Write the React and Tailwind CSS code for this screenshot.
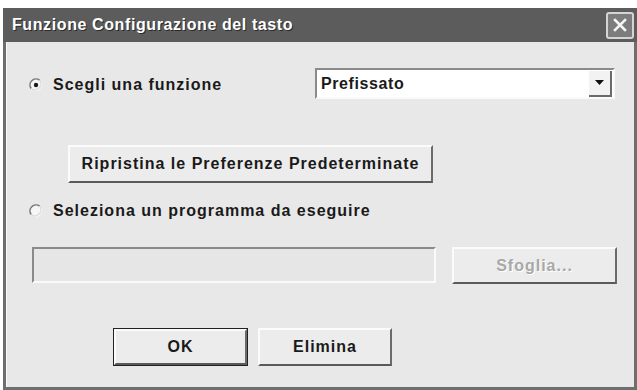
import React from "react";

function Radio({ checked }) {
  return (
    <svg width="14" height="14" viewBox="0 0 14 14" className="shrink-0">
      <circle cx="7" cy="7" r="6" fill="#f6f6f6" />
      <path d="M2.2 10.6 A6 6 0 0 1 10.6 2.2" fill="none" stroke="#7a7a7a" strokeWidth="1.6" />
      <path d="M10.6 2.2 A6 6 0 0 1 2.2 10.6" fill="none" stroke="#dadada" strokeWidth="1.2" />
      {checked && <circle cx="7" cy="7" r="2.2" fill="#1a1a1a" />}
    </svg>
  );
}

const raised =
  "border-t-2 border-l-2 border-t-[#fbfbfb] border-l-[#fbfbfb] border-b-2 border-r-2 border-b-[#5a5a5a] border-r-[#6a6a6a]";
const sunken =
  "border-t-2 border-l-2 border-t-[#8a8a8a] border-l-[#8a8a8a] border-b-2 border-r-2 border-b-[#fafafa] border-r-[#fafafa]";

export default function App() {
  const font = { fontFamily: '"Liberation Sans", Arial, sans-serif' };
  return (
    <div className="w-[637px] h-[390px] bg-white overflow-hidden" style={font}>
      <div className="ml-[3px] mt-[8px] w-[634px] h-[382px] flex flex-col bg-[#e8e8e8] border-l-[3px] border-r-[3px] border-b-[3px] border-[#6e6e6e]">
        {/* Title bar */}
        <div className="h-[34px] -mx-[3px] bg-[#5c5c5c] flex items-center pl-[9px] pr-[3px] shrink-0">
          <span className="text-white text-[16px] font-bold tracking-[0.6px] [text-shadow:1px_1px_0_#2a2a2a] leading-none">
            Funzione Configurazione del tasto
          </span>
          <div className="ml-auto w-[28px] h-[27px] border-2 border-[#d4d4d4] rounded-[3px] bg-[#7c7c7c] flex items-center justify-center">
            <svg width="16" height="16" viewBox="0 0 16 16">
              <path d="M3 3 L13 13 M13 3 L3 13" stroke="#f4f4f4" strokeWidth="2.6" strokeLinecap="square" />
            </svg>
          </div>
        </div>

        {/* Body */}
        <div className="flex flex-col border-l border-[#fafafa] flex-1">
          {/* Row 1 */}
          <div className="mt-[27px] h-[31px] flex items-center pr-[19px]">
            <div className="ml-[22px] flex items-center gap-[10px]">
              <Radio checked />
              <span className="text-[16px] font-bold tracking-[1px] text-[#1a1a1a]">Scegli una funzione</span>
            </div>
            <div className={`ml-auto -mt-[2px] w-[300px] h-[31px] bg-white flex items-center ${sunken}`}>
              <span className="pl-[4px] text-[16px] font-bold tracking-[0.6px] text-[#1a1a1a]">Prefissato</span>
              <div className="ml-auto mr-[1px] w-[23px] h-[26px] bg-[#f2f2f2] border-b-2 border-r-2 border-b-[#6a6a6a] border-r-[#6a6a6a] flex items-center justify-center">
                <svg width="9" height="5" viewBox="0 0 9 5">
                  <path d="M0 0 H9 L4.5 5 Z" fill="#111" />
                </svg>
              </div>
            </div>
          </div>

          {/* Reset button */}
          <div className="mt-[45px] ml-[61px]">
            <div className={`w-[365px] h-[38px] bg-[#ececec] flex items-center justify-center ${raised}`}>
              <span className="text-[16px] font-bold tracking-[1px] text-[#1a1a1a]">
                Ripristina le Preferenze Predeterminate
              </span>
            </div>
          </div>

          {/* Radio 2 */}
          <div className="mt-[20px] h-[16px] ml-[22px] flex items-center gap-[10px]">
            <Radio />
            <span className="text-[16px] font-bold tracking-[1px] text-[#1a1a1a]">
              Seleziona un programma da eseguire
            </span>
          </div>

          {/* Text field row */}
          <div className="mt-[28px] ml-[25px] flex items-start gap-[16px]">
            <div className={`w-[404px] h-[36px] bg-[#e6e6e6] ${sunken}`} />
            <div className={`w-[165px] h-[37px] bg-[#ececec] flex items-center justify-center ${raised}`}>
              <span className="text-[16px] font-bold tracking-[1px] text-[#a8a8a8] [text-shadow:1px_1px_0_#ffffff]">
                Sfoglia...
              </span>
            </div>
          </div>

          {/* Bottom buttons */}
          <div className="mt-[44px] ml-[106px] flex gap-[10px]">
            <div className="w-[135px] h-[38px] border border-[#222] flex">
              <div className={`flex-1 bg-[#ececec] flex items-center justify-center ${raised}`}>
                <span className="text-[16px] font-bold tracking-[1px] text-[#1a1a1a]">OK</span>
              </div>
            </div>
            <div className={`w-[134px] h-[38px] bg-[#ececec] flex items-center justify-center ${raised}`}>
              <span className="text-[16px] font-bold tracking-[1px] text-[#1a1a1a]">Elimina</span>
            </div>
          </div>
        </div>
      </div>
    </div>
  );
}
